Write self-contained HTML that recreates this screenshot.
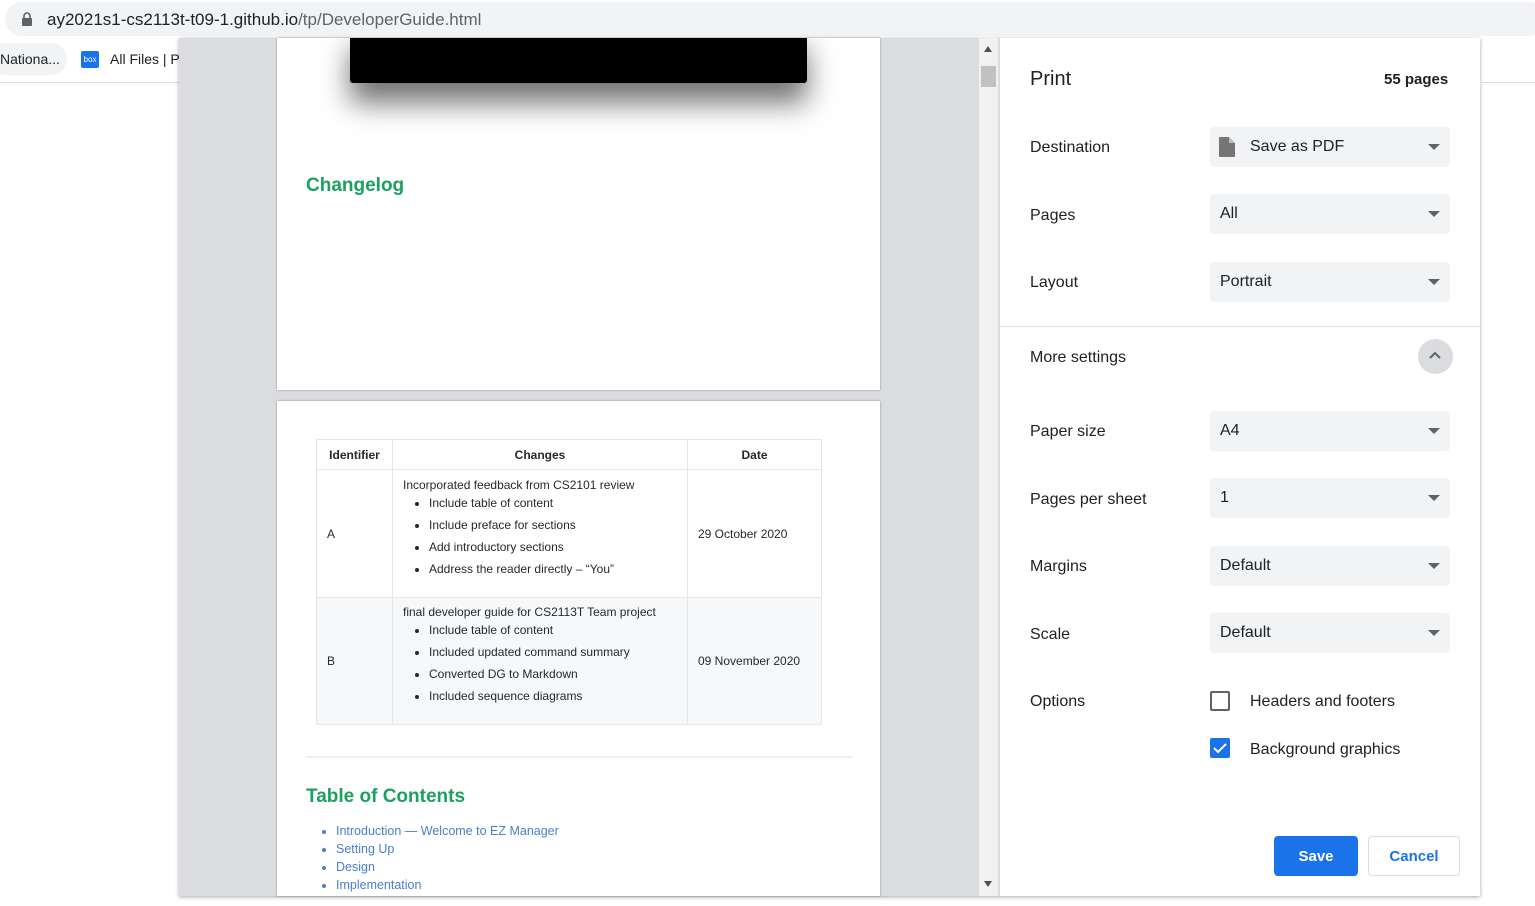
<!DOCTYPE html>
<html><head><meta charset="utf-8"><style>
*{margin:0;padding:0;box-sizing:border-box}
body{width:1535px;height:906px;overflow:hidden;background:#fff;font-family:"Liberation Sans",Arial,sans-serif;position:relative;color:#202124}
.abs{position:absolute}
.url{left:5px;top:2px;width:1540px;height:34px;background:#f1f3f4;border-radius:17px}
.sel{position:absolute;left:1210px;width:240px;height:40px;background:#f1f3f4;border-radius:4px;font-size:16px;line-height:40px;padding-left:10px;color:#202124}
.sel:after{content:"";position:absolute;right:10px;top:17px;border-left:6px solid transparent;border-right:6px solid transparent;border-top:6px solid #5f6368}
.lbl{position:absolute;left:1030px;font-size:16px;color:#202124}
td,th{border:1px solid #e4e6e8;font-family:"Liberation Sans",sans-serif;font-size:12px;color:#24292e;vertical-align:middle}
th{font-weight:bold;height:30px}
td ul{margin-left:26px}
td li{margin:8px 0 0;line-height:14px}
.toc li{color:#4a7fc8;font-size:12.5px;line-height:18px}
</style></head><body>
<div class="abs url"></div>
<svg class="abs" style="left:21px;top:12px" width="12" height="15"><rect x="1" y="6" width="10" height="8" rx="1" fill="#5f6368"/><path d="M3 6V4a3 3 0 016 0v2" stroke="#5f6368" stroke-width="1.6" fill="none"/></svg>
<div class="abs" style="left:47px;top:10px;font-size:17px;color:#202124">ay2021s1-cs2113t-t09-1.github.io<span style="color:#5f6368">/tp/DeveloperGuide.html</span></div>
<div class="abs" style="left:-10px;top:43px;width:77px;height:32px;background:#f1f3f4;border-radius:16px"></div>
<div class="abs" style="left:0;top:51px;font-size:14px">Nationa...</div>
<div class="abs" style="left:81px;top:51px;width:18px;height:17px;background:#1a73e8;border-radius:2px;color:#fff;font-size:8px;line-height:17px;text-align:center">box</div>
<div class="abs" style="left:110px;top:51px;font-size:14px">All Files | P</div>
<div class="abs" style="left:0;top:82px;width:1535px;height:1px;background:#dadce0"></div>

<div class="abs" style="left:179px;top:38px;width:1301px;height:858px;background:#dadce0;box-shadow:0 1px 4px rgba(0,0,0,.35)"></div>
<div class="abs" style="left:979px;top:38px;width:19px;height:858px;background:#f1f1f1"></div>
<div class="abs" style="left:981px;top:66px;width:15px;height:21px;background:#c1c1c1"></div>
<div class="abs" style="left:984px;top:46px;border-left:4px solid transparent;border-right:4px solid transparent;border-bottom:6px solid #505050"></div>
<div class="abs" style="left:984px;top:881px;border-left:4px solid transparent;border-right:4px solid transparent;border-top:6px solid #505050"></div>

<div class="abs" style="left:277px;top:38px;width:603px;height:352px;background:#fff;box-shadow:0 0 2px rgba(0,0,0,.4);overflow:hidden">
 <div class="abs" style="left:73px;top:-10px;width:457px;height:55px;background:#000;border-radius:3px;box-shadow:0 20px 28px rgba(0,0,0,.55)"></div>
 <div class="abs" style="left:29px;top:137px;font-size:19px;font-weight:bold;color:#1aa160;font-family:'Liberation Sans Narrow','Liberation Sans',sans-serif">Changelog</div>
</div>
<div class="abs" style="left:277px;top:401px;width:603px;height:495px;background:#fff;box-shadow:0 0 2px rgba(0,0,0,.4);overflow:hidden">
 <table class="abs" style="left:39px;top:38px;width:506px;border-collapse:collapse">
  <tr><th style="width:76px">Identifier</th><th style="width:295px">Changes</th><th>Date</th></tr>
  <tr style="height:128px"><td style="padding-left:10px">A</td><td style="padding:6px 10px 20px">Incorporated feedback from CS2101 review<ul style="margin-top:-4px"><li>Include table of content</li><li>Include preface for sections</li><li>Add introductory sections</li><li>Address the reader directly – “You”</li></ul></td><td style="padding-left:10px">29 October 2020</td></tr>
  <tr style="height:127px;background:#f6f8fa"><td style="padding-left:10px">B</td><td style="padding:6px 10px 20px">final developer guide for CS2113T Team project<ul style="margin-top:-4px"><li>Include table of content</li><li>Included updated command summary</li><li>Converted DG to Markdown</li><li>Included sequence diagrams</li></ul></td><td style="padding-left:10px">09 November 2020</td></tr>
 </table>
 <div class="abs" style="left:29px;top:355px;width:546px;height:2px;background:#eee"></div>
 <div class="abs" style="left:29px;top:385px;font-size:19px;font-weight:bold;color:#1aa160;font-family:'Liberation Sans Narrow','Liberation Sans',sans-serif">Table of Contents</div>
 <ul class="abs toc" style="left:59px;top:421px">
  <li>Introduction — Welcome to EZ Manager</li><li>Setting Up</li><li>Design</li><li>Implementation</li></ul>
</div>

<div class="abs" style="left:1000px;top:38px;width:480px;height:858px;background:#fff"></div>
<div class="abs" style="left:1030px;top:68px;font-size:20px">Print</div>
<div class="abs" style="left:1384px;top:71px;font-size:15px;font-weight:bold;color:#202124">55 pages</div>
<div class="lbl" style="top:139px">Destination</div>
<div class="sel" style="top:127px;padding-left:40px">Save as PDF</div>
<svg class="abs" style="left:1218px;top:136px" width="18" height="22"><path d="M2 1h9l6 6v13a1 1 0 01-1 1H2a1 1 0 01-1-1V2a1 1 0 011-1z" fill="#757575"/><path d="M11 1v6h6" fill="#bdbdbd"/></svg>
<div class="lbl" style="top:207px">Pages</div><div class="sel" style="top:194px">All</div>
<div class="lbl" style="top:274px">Layout</div><div class="sel" style="top:262px">Portrait</div>
<div class="abs" style="left:1000px;top:326px;width:480px;height:1px;background:#e0e0e0"></div>
<div class="lbl" style="top:349px">More settings</div>
<div class="abs" style="left:1418px;top:339px;width:35px;height:35px;border-radius:50%;background:#dadce0"></div>
<svg class="abs" style="left:1428px;top:350px" width="14" height="10"><path d="M2 8l5-5 5 5" stroke="#5f6368" stroke-width="2" fill="none"/></svg>
<div class="lbl" style="top:423px">Paper size</div><div class="sel" style="top:411px">A4</div>
<div class="lbl" style="top:491px">Pages per sheet</div><div class="sel" style="top:478px">1</div>
<div class="lbl" style="top:558px">Margins</div><div class="sel" style="top:546px">Default</div>
<div class="lbl" style="top:626px">Scale</div><div class="sel" style="top:613px">Default</div>
<div class="lbl" style="top:693px">Options</div>
<div class="abs" style="left:1210px;top:691px;width:20px;height:20px;border:2px solid #5f6368;border-radius:2px"></div>
<div class="abs" style="left:1250px;top:693px;font-size:16px">Headers and footers</div>
<div class="abs" style="left:1210px;top:738px;width:20px;height:20px;background:#1a73e8;border-radius:2px"></div>
<svg class="abs" style="left:1210px;top:738px" width="20" height="20"><path d="M4 10l4 4 8-8" stroke="#fff" stroke-width="2" fill="none"/></svg>
<div class="abs" style="left:1250px;top:741px;font-size:16px">Background graphics</div>
<div class="abs" style="left:1274px;top:836px;width:84px;height:40px;background:#1a73e8;border-radius:4px;color:#fff;font-weight:bold;font-size:15px;text-align:center;line-height:42px">Save</div>
<div class="abs" style="left:1368px;top:836px;width:92px;height:40px;border:1px solid #dadce0;border-radius:4px;color:#1a73e8;font-weight:bold;font-size:15px;text-align:center;line-height:40px">Cancel</div>
<div class="abs" style="left:1480px;top:82px;width:55px;height:1px;background:#dadce0"></div>
</body></html>
